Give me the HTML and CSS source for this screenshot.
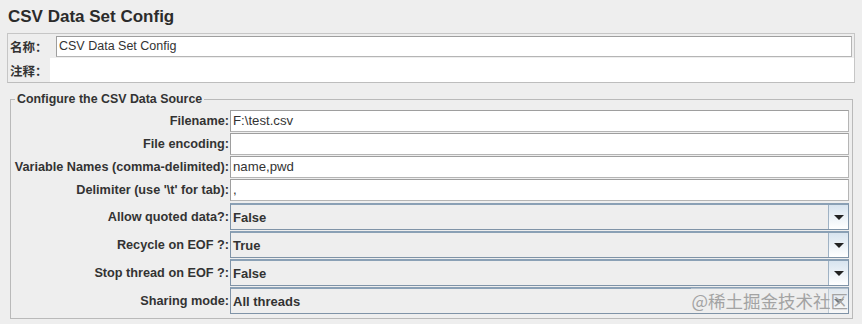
FILE: index.html
```html
<!DOCTYPE html>
<html lang="zh">
<head>
    <meta charset="UTF-8">
    <title>CSV Data Set Config</title>
    <link rel="stylesheet" href="styles.css">
</head>
<body>
    <div id="config-page">
        <div class="title">CSV Data Set Config</div>

        <div class="name-panel">
            <div class="name-row">
                <span class="cn-label">名称：</span>
                <div class="field">CSV Data Set Config</div>
            </div>
            <div class="comment-row">
                <span class="cn-label">注释：</span>
                <div class="comment-field"></div>
            </div>
        </div>

        <fieldset class="source">
            <legend>Configure the CSV Data Source</legend>
            <div class="form-grid">
                <label>Filename:</label>
                <div class="field">F:\test.csv</div>

                <label>File encoding:</label>
                <div class="field"></div>

                <label>Variable Names (comma-delimited):</label>
                <div class="field">name,pwd</div>

                <label>Delimiter (use '\t' for tab):</label>
                <div class="field">,</div>

                <label class="combo-label first">Allow quoted data?:</label>
                <div class="combo first"><span>False</span><i class="arrow"></i></div>

                <label class="combo-label">Recycle on EOF ?:</label>
                <div class="combo"><span>True</span><i class="arrow"></i></div>

                <label class="combo-label">Stop thread on EOF ?:</label>
                <div class="combo"><span>False</span><i class="arrow"></i></div>

                <label class="combo-label">Sharing mode:</label>
                <div class="combo"><span>All threads</span><i class="arrow"></i></div>
            </div>
        </fieldset>

        <div class="watermark">@稀土掘金技术社区</div>
    </div>
</body>
</html>
```

FILE: styles.css
```css
body {
    margin: 0;
    background-color: #eeeeee;
    font-family: "Liberation Sans", Arial, "Noto Sans CJK SC", sans-serif;
    color: #333333;
    font-size: 12.7px;
}

#config-page {
    position: relative;
    width: 862px;
    height: 324px;
    overflow: hidden;
}

.title {
    font-size: 17px;
    font-weight: bold;
    padding: 7px 0 0 8px;
    height: 33px;
    box-sizing: border-box;
    color: #2b2b2b;
}

.name-panel {
    margin: 0 7px;
    border: 1px solid #c6c6c6;
    border-bottom-color: #bdbdbd;
}

.cn-label {
    font-family: "Noto Sans CJK SC", sans-serif;
    font-weight: bold;
    font-size: 12.5px;
    color: #333;
}

.name-row {
    display: flex;
    align-items: center;
    padding: 2px 2px 1px 2px;
}

.name-row .cn-label {
    width: 46px;
}

.name-row .field {
    flex: 1;
    height: 19px;
    line-height: 19px;
    font-size: 12.5px;
}

.comment-row {
    display: flex;
    align-items: center;
    padding-left: 2px;
}

.comment-row .cn-label {
    width: 40px;
}

.comment-field {
    flex: 1;
    height: 24px;
    background: white;
}

.field {
    height: 20px;
    line-height: 20px;
    background: white;
    border: 1px solid #9e9e9e;
    border-bottom-color: #b5b5b5;
    border-right-color: #b5b5b5;
    padding: 0 2px;
    font-size: 13.2px;
    color: #333;
    white-space: nowrap;
}

.source {
    margin: 9px 9px 0 10px;
    border: 1px solid #b9b9b9;
    padding: 4px 3px 4px 0;
}

.source legend {
    font-weight: bold;
    font-size: 12.4px;
    line-height: 14px;
    padding: 0 2px;
    margin-left: 4px;
    color: #333;
}

.form-grid {
    display: grid;
    grid-template-columns: 219px 1fr;
    row-gap: 1px;
    column-gap: 0;
}

.form-grid label {
    font-weight: bold;
    text-align: right;
    align-self: center;
    padding-right: 1px;
    white-space: nowrap;
}

.combo-label.first, .combo.first {
    margin-top: 1px;
}

.combo {
    height: 27px;
    box-sizing: border-box;
    display: flex;
    align-items: center;
    border: 1px solid #7f93a7;
    border-top: 2px solid #8aa0b5;
    background: #eeeeee;
    font-weight: bold;
    font-size: 13px;
    color: #333;
}

.combo span {
    flex: 1;
    padding-left: 2px;
}

.arrow {
    width: 19px;
    height: 100%;
    border-left: 1px solid #9fb2c4;
    background: linear-gradient(#d8e4ef, #ffffff);
    position: relative;
}

.arrow::after {
    content: "";
    position: absolute;
    left: 5px;
    top: 10px;
    border-left: 5px solid transparent;
    border-right: 5px solid transparent;
    border-top: 5px solid #222;
}

.watermark {
    position: absolute;
    right: 14px;
    bottom: 11px;
    font-family: "Noto Sans CJK SC", sans-serif;
    font-size: 17.5px;
    color: #a3a3a3;
    background: rgba(238, 238, 238, 0.4);
}
```
